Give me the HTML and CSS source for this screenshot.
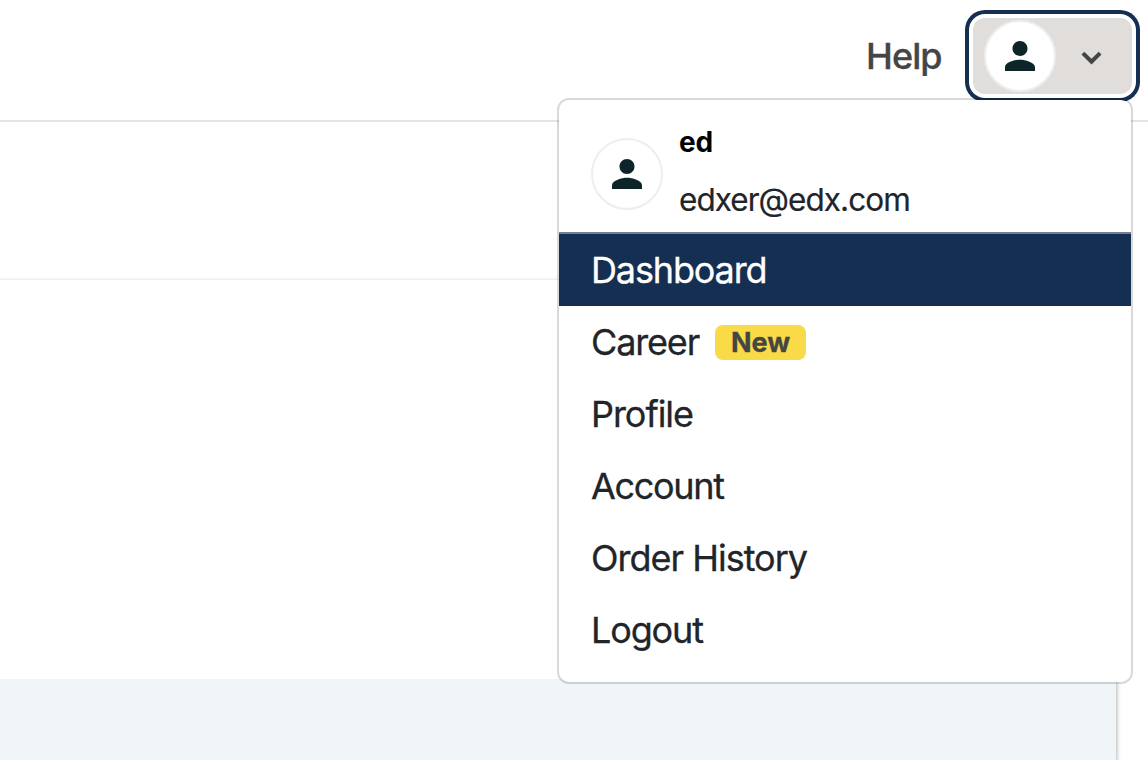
FILE: index.html
```html
<!DOCTYPE html>
<html lang="en">
<head>
<meta charset="utf-8">
<title>Account menu</title>
<link rel="stylesheet" href="styles.css">
</head>
<body>
<header class="topbar">
  <a class="help"><span class="t-help">Help</span></a>
  <button class="user-toggle" type="button" aria-label="Account menu">
    <span class="avatar"><svg viewBox="-.267 -.267 24.533 24.533" class="person"><path d="M12 12c2.210 0 4-1.790 4-4s-1.790-4-4-4-4 1.790-4 4 1.790 4 4 4zm0 2c-2.670 0-8 1.340-8 4v2h16v-2c0-2.660-5.330-4-8-4z"/></svg></span>
    <svg viewBox="-.3 0 24 24" class="chevron"><path d="M7.700 8.200 12 12.500l4.300-4.300L18 9.900l-6 6-6-6z"/></svg>
  </button>
</header>
<div class="subbar"></div>
<main class="content"></main>
<div class="panel"></div>
<nav class="menu">
  <div class="menu-user">
    <span class="avatar"><svg viewBox="-.267 -.267 24.533 24.533" class="person"><path d="M12 12c2.210 0 4-1.790 4-4s-1.790-4-4-4-4 1.790-4 4 1.790 4 4 4zm0 2c-2.670 0-8 1.340-8 4v2h16v-2c0-2.660-5.330-4-8-4z"/></svg></span>
    <div class="identity">
      <span class="name">ed</span>
      <span class="email">edxer@edx.com</span>
    </div>
  </div>
  <a class="item active"><span class="t-dashboard">Dashboard</span></a>
  <a class="item"><span class="t-career">Career</span><span class="badge">New</span></a>
  <a class="item"><span class="t-profile">Profile</span></a>
  <a class="item"><span class="t-account">Account</span></a>
  <a class="item"><span class="t-order">Order History</span></a>
  <a class="item"><span class="t-logout">Logout</span></a>
</nav>
</body>
</html>
```

FILE: styles.css
```css
* { box-sizing: border-box; }
body {
  margin: 0;
  width: 1148px;
  height: 760px;
  overflow: hidden;
  position: relative;
  background: #fff;
  font-family: Inter, "Liberation Sans", sans-serif;
  color: #212529;
}
.topbar {
  height: 122px;
  padding: 18px 16px 0 0;
  border-bottom: 2px solid #e4e4e4;
  display: flex;
  justify-content: flex-end;
  align-items: flex-start;
}
.help {
  width: 107px;
  height: 76px;
  line-height: 76px;
  font-size: 36px;
  font-weight: 500;
  color: #454545;
  white-space: nowrap;
  -webkit-text-stroke: .3px currentColor;
}
.t-help { letter-spacing: -.9px; }
.user-toggle {
  width: 159px;
  height: 76px;
  padding: 0 20px 0 11px;
  border: 0;
  border-radius: 12px;
  background: #e1dddb;
  box-shadow: 0 0 0 4px #fff, 0 0 0 8px #152f52;
  display: flex;
  align-items: center;
  justify-content: space-between;
}
.avatar {
  flex: none;
  width: 72px;
  height: 72px;
  border: 2px solid #eee;
  border-radius: 50%;
  background: #fff;
  display: flex;
  align-items: center;
  justify-content: center;
}
.person { width: 46px; height: 46px; fill: #0d2529; }
.chevron { width: 40px; height: 40px; margin: 3px 1px 0 0; fill: #454545; }
.subbar {
  width: 1116px;
  height: 158px;
  border-bottom: 1px solid #efefef;
  background: linear-gradient(#fff 154px, #f7f7f7);
}
.content { height: 399px; }
.panel {
  width: 1116px;
  height: 81px;
  background: #f0f5f8;
  box-shadow: 1px 2px 4px rgba(0, 0, 0, .3);
  clip-path: inset(0 -8px 0 0);
}
.menu {
  position: absolute;
  left: 557px;
  top: 98px;
  width: 576px;
  height: 586px;
  border: 2px solid rgba(0, 0, 0, .15);
  border-radius: 12px;
  background: #fff;
  background-clip: padding-box;
}
.menu-user {
  height: 134px;
  padding: 12px 32px 0;
  border-bottom: 2px solid #73808f;
  display: flex;
  align-items: center;
  gap: 16px;
}
.menu-user .avatar { margin-top: 4px; }
.identity {
  height: 116px;
  display: flex;
  flex-direction: column;
  white-space: nowrap;
}
.name { font-size: 28px; font-weight: 700; line-height: 56px; color: #000; letter-spacing: -.3px; }
.email { font-size: 31.5px; line-height: 60px; letter-spacing: -.95px; -webkit-text-stroke: .2px currentColor; }
.item {
  height: 72px;
  padding: 0 32px;
  display: flex;
  align-items: center;
  font-size: 36px;
  white-space: nowrap;
  -webkit-text-stroke: .3px currentColor;
}
.active { background: #152f52; color: #fff; }
.item span { letter-spacing: -1.15px; }
.item .t-order { letter-spacing: -1px; }
.item .t-profile { letter-spacing: -1.05px; }
.item .t-account { letter-spacing: -1.3px; }
.item .badge {
  margin-left: 16px;
  width: 91px;
  height: 35px;
  border-radius: 8px;
  background: #f9da47;
  color: #454545;
  font-size: 27px;
  font-weight: 700;
  line-height: 35px;
  text-align: center;
  letter-spacing: 0;
}
```
